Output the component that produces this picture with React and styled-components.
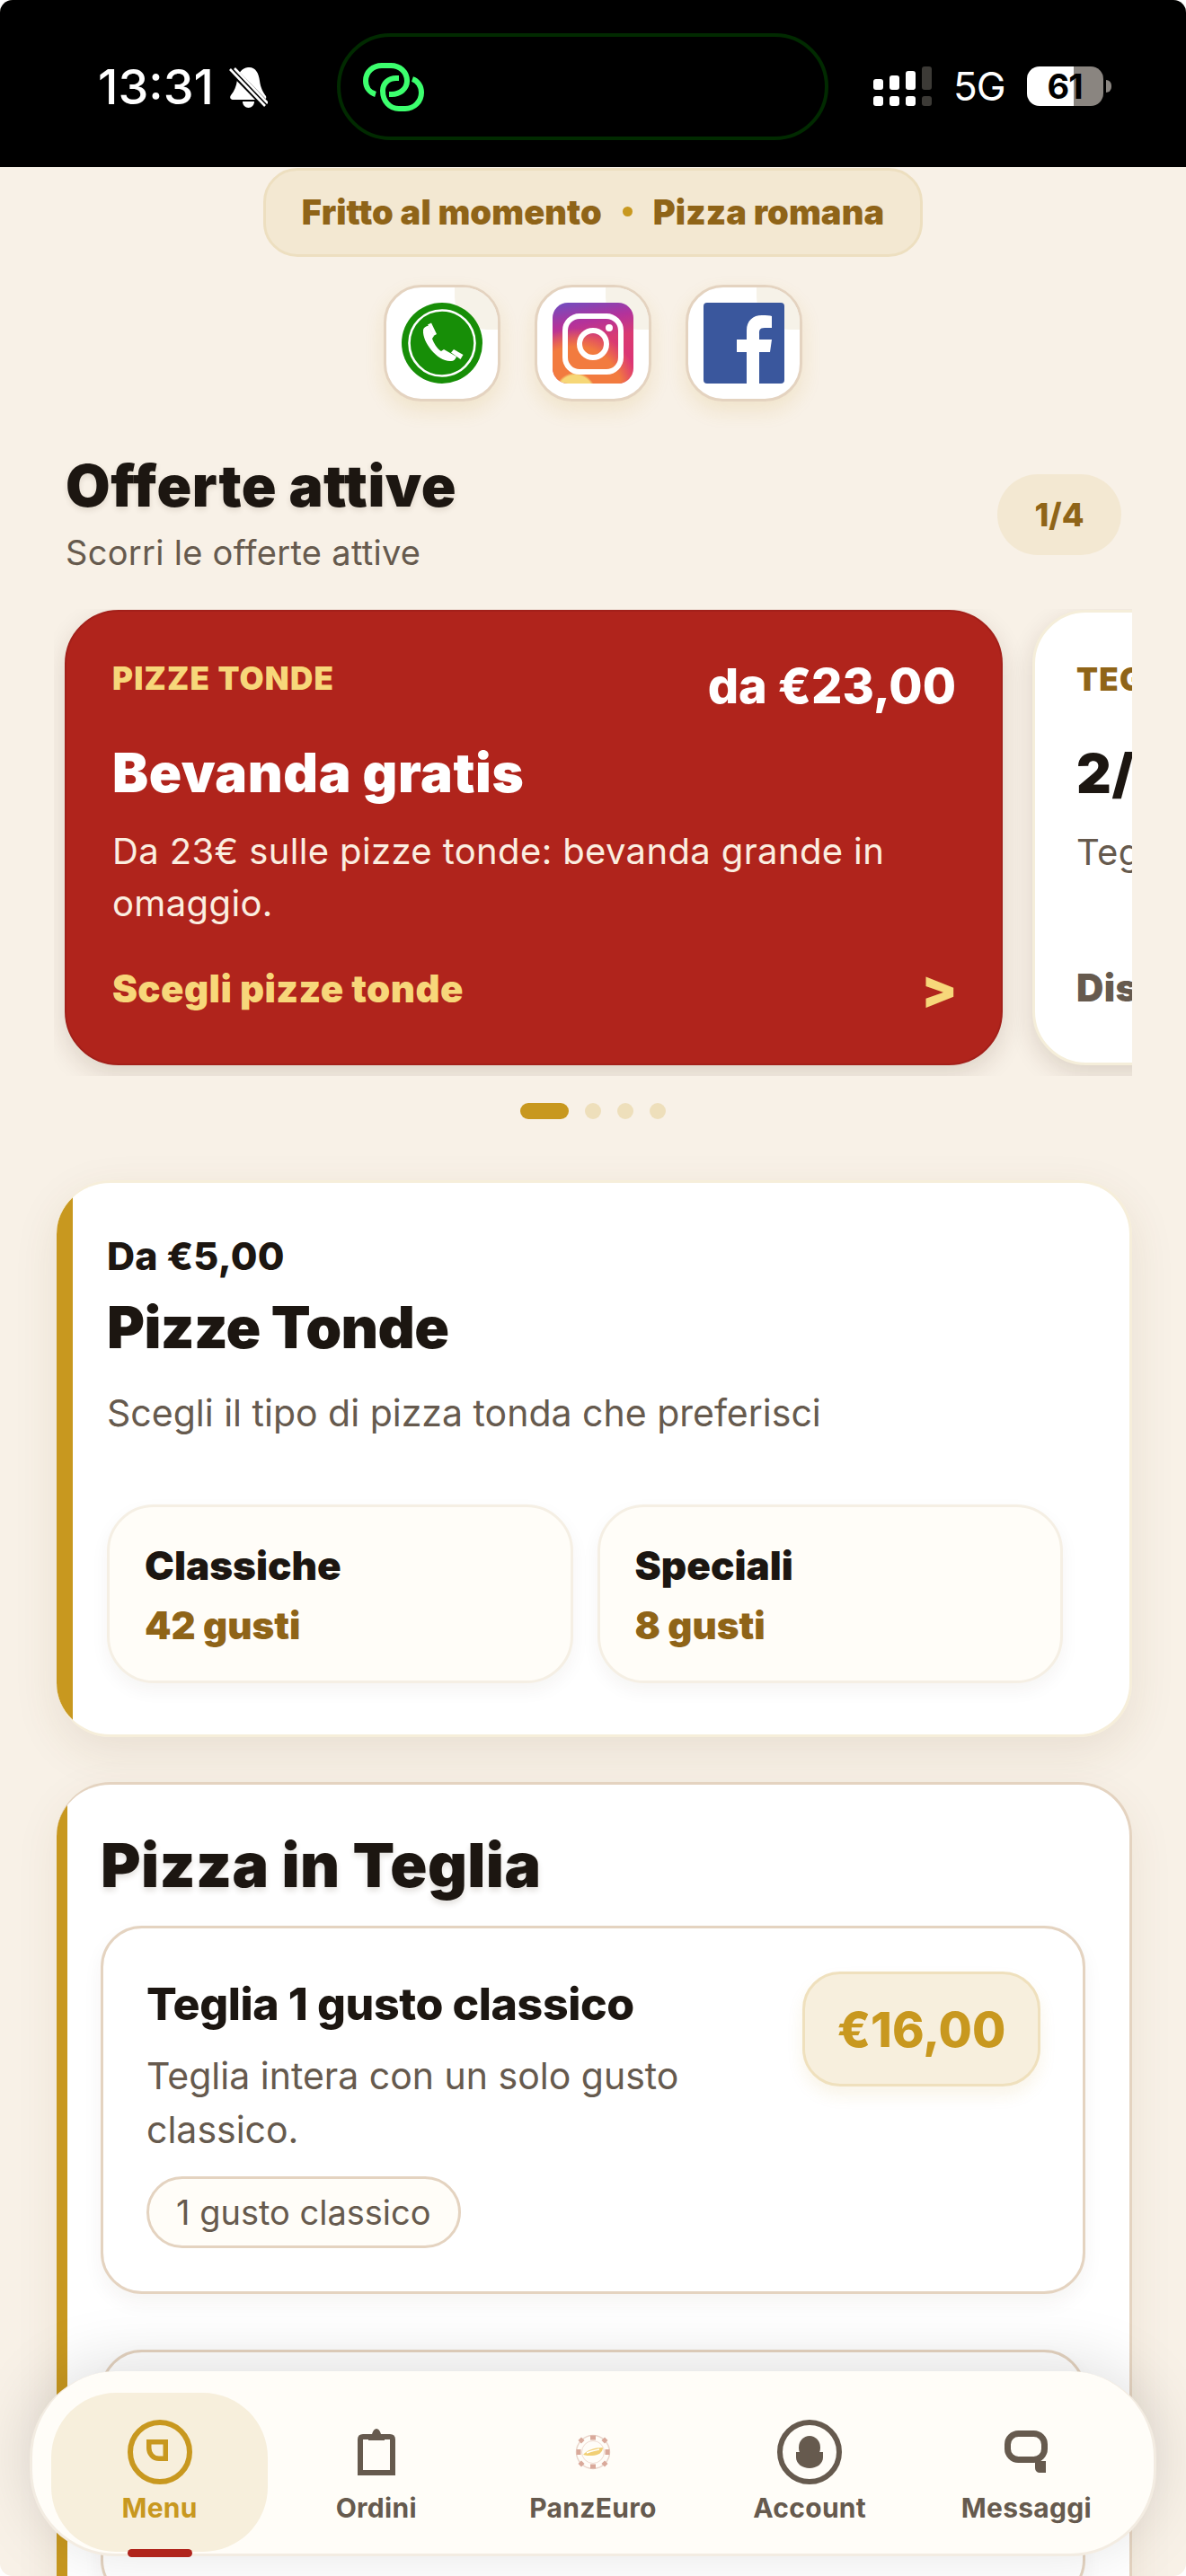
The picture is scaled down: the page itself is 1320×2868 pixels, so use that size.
import React from "react";
import styled, { createGlobalStyle } from "styled-components";

const ink = "#1c1611";
const muted = "#665a4e";
const gold = "#c8981f";
const brown = "#8f6418";
const line = "#e4d3c0";
const sand = "#f3e8d2";
const red = "#b0241c";
const butter = "#f7d77a";

const Global = createGlobalStyle`
  html, body { margin: 0; padding: 0; background: #ffffff; }
  * { box-sizing: border-box; }
  body { font-family: Inter, "Liberation Sans", sans-serif; }
`;

const Screen = styled.div`
  position: relative;
  width: 1320px;
  height: 2868px;
  overflow: hidden;
  background: #f8f1e7;
  border-radius: 14px;
`;

const StatusBar = styled.header`
  height: 186px;
  background: #000;
  display: flex;
  align-items: flex-start;
  padding: 37px 0 0 109px;
  color: #fff;
`;
const Clock = styled.div`
  display: flex;
  align-items: center;
  gap: 17px;
  width: 266px;
  height: 119px;
  font-size: 54px;
  font-weight: 500;
  line-height: 1;
`;
const Island = styled.div`
  width: 547px;
  height: 119px;
  border: 4px solid #012a00;
  border-radius: 60px;
  padding: 29px 0 0 25px;
  flex-shrink: 0;
`;
const StatusRight = styled.div`
  display: flex;
  align-items: center;
  margin: 37px 0 0 50px;
  height: 44px;
`;
const FiveG = styled.span`
  font-size: 44px;
  font-weight: 400;
  margin-left: 24px;
  line-height: 44px;
  letter-spacing: -1px;
`;
const Battery = styled.div`
  position: relative;
  margin-left: 24px;
  width: 85px;
  height: 44px;
  border-radius: 14px;
  display: flex;
  align-items: center;
  justify-content: center;
  background: linear-gradient(90deg, #fff 61%, #8a8580 61%);
  color: #000;
  font-size: 38px;
  font-weight: 700;
  letter-spacing: -1px;
  &::after {
    content: "";
    position: absolute;
    right: -9px;
    top: 15px;
    width: 6px;
    height: 14px;
    border-radius: 0 6px 6px 0;
    background: #8a8580;
  }
`;

const Main = styled.main`
  display: flex;
  flex-direction: column;
`;
const Banner = styled.div`
  align-self: center;
  margin-top: 1px;
  width: 734px;
  height: 99px;
  display: flex;
  align-items: center;
  justify-content: center;
  gap: 23px;
  background: ${sand};
  border: 3px solid #eddfc0;
  border-radius: 38px;
  color: ${brown};
  font-size: 38px;
  font-weight: 900;
  letter-spacing: 0.1px;
  padding-bottom: 2px;
`;
const BannerDot = styled.i`
  width: 11px;
  height: 11px;
  border-radius: 50%;
  background: ${gold};
`;
const Socials = styled.nav`
  display: flex;
  justify-content: center;
  gap: 38px;
  margin-top: 31px;
`;
const Social = styled.a`
  position: relative;
  width: 130px;
  height: 130px;
  background: #fff;
  border: 3px solid ${line};
  border-radius: 42px;
  display: flex;
  align-items: center;
  justify-content: center;
  box-shadow: 0 10px 22px rgba(200, 152, 31, 0.14);
  &::before {
    content: "";
    position: absolute;
    top: 0;
    right: 0;
    width: 48px;
    height: 47px;
    background: #f6f2e8;
    border-radius: 0 38px 0 36px;
  }
  svg { position: relative; }
`;

const SectionHead = styled.div`
  display: flex;
  justify-content: space-between;
  align-items: center;
  margin-top: 58px;
  padding: 0 72px 0 73px;
`;
const SectionTitle = styled.h2`
  margin: 0;
  font-size: 64px;
  line-height: 72px;
  font-weight: 900;
  letter-spacing: 0.5px;
  color: ${ink};
  text-shadow: 0 3px 6px rgba(60, 40, 20, 0.12);
`;
const SectionSub = styled.p`
  margin: 14px 0 0;
  font-size: 38px;
  line-height: 48px;
  color: ${muted};
  letter-spacing: 0.3px;
`;
const Counter = styled.div`
  width: 138px;
  height: 90px;
  border-radius: 45px;
  background: ${sand};
  color: ${brown};
  font-size: 36px;
  font-weight: 800;
  display: flex;
  align-items: center;
  justify-content: center;
  margin-top: 2px;
`;

const Carousel = styled.div`
  margin: 39px 0 0 60px;
  width: 1200px;
  height: 520px;
  overflow: hidden;
  display: flex;
  gap: 33px;
  padding: 1px 0 0 12px;
`;
const Offer = styled.article`
  flex: 0 0 1044px;
  height: 507px;
  border-radius: 60px;
  padding: 51px 50px 58px ${(p) => (p.$light ? "46px" : "51px")};
  display: flex;
  flex-direction: column;
  white-space: nowrap;
  background: ${(p) => (p.$light ? "#fff" : red)};
  border: ${(p) => (p.$light ? "3px solid #f5eeda" : "2px solid #a3201a")};
  color: ${(p) => (p.$light ? ink : "#fff")};
  box-shadow: 0 10px 28px rgba(60, 30, 10, 0.14);
`;
const OfferTop = styled.div`
  display: flex;
  justify-content: space-between;
  align-items: flex-start;
  height: 64px;
`;
const OfferTag = styled.span`
  margin-top: 3px;
  font-size: 35px;
  line-height: 40px;
  font-weight: 900;
  letter-spacing: 1.2px;
  color: ${(p) => (p.$light ? brown : butter)};
`;
const OfferPrice = styled.span`
  font-size: 54px;
  line-height: 64px;
  font-weight: 800;
`;
const OfferTitle = styled.h3`
  margin: 28px 0 0;
  font-size: 60px;
  line-height: 72px;
  font-weight: 900;
  letter-spacing: 0.6px;
`;
const OfferText = styled.p`
  margin: 23px 0 0;
  font-size: 40px;
  line-height: 58px;
  letter-spacing: 0.37px;
  white-space: normal;
  color: ${(p) => (p.$light ? muted : "#fbeee0")};
`;
const OfferCta = styled.div`
  margin-top: auto;
  display: flex;
  justify-content: space-between;
  align-items: center;
  font-size: 42px;
  line-height: 50px;
  font-weight: 900;
  letter-spacing: 0.4px;
  color: ${(p) => (p.$light ? muted : butter)};
`;
const Chevron = styled.span`
  font-size: 58px;
  font-weight: 900;
  margin-right: -2px;
`;
const Dots = styled.div`
  margin-top: 30px;
  display: flex;
  justify-content: center;
  gap: 18px;
`;
const Dot = styled.i`
  width: ${(p) => (p.$active ? "54px" : "18px")};
  height: 18px;
  border-radius: 9px;
  background: ${(p) => (p.$active ? gold : "#eedfbb")};
`;

const TondeCard = styled.section`
  margin: 68px 60px 0 63px;
  background: linear-gradient(90deg, ${gold} 18px, #fff 18px);
  border: 3px solid #f6eeda;
  border-left: 0;
  border-radius: 60px;
  padding: 56px 74px 57px 56px;
  box-shadow: 0 16px 50px rgba(100, 70, 30, 0.1);
`;
const FromPrice = styled.div`
  font-size: 43px;
  line-height: 50px;
  font-weight: 800;
  letter-spacing: 0.2px;
  color: ${ink};
`;
const CardTitle = styled.h2`
  margin: 17px 0 0;
  font-size: 64px;
  line-height: 76px;
  font-weight: 900;
  color: ${ink};
  letter-spacing: -0.6px;
`;
const CardSub = styled.p`
  margin: 32px 0 0;
  font-size: 41px;
  line-height: 50px;
  color: ${muted};
`;
const Choices = styled.div`
  margin-top: 77px;
  display: grid;
  grid-template-columns: 1fr 1fr;
  gap: 27px;
`;
const Choice = styled.a`
  height: 199px;
  background: #fffdf8;
  border: 3px solid #f5efe4;
  border-radius: 52px;
  padding: 39px 39px 0;
  box-shadow: 0 8px 20px rgba(60, 40, 20, 0.05);
`;
const ChoiceName = styled.div`
  font-size: 44px;
  line-height: 52px;
  font-weight: 900;
  color: ${ink};
`;
const ChoiceCount = styled.div`
  margin-top: 16px;
  font-size: 42px;
  line-height: 50px;
  font-weight: 900;
  color: ${brown};
`;

const TegliaCard = styled.section`
  margin: 50px 60px 0 63px;
  background: linear-gradient(90deg, ${gold} 12px, #fff 12px);
  border: 3px solid ${line};
  border-left: 0;
  border-radius: 60px;
  padding: 47px 49px 40px 49px;
  box-shadow: 0 16px 50px rgba(100, 70, 30, 0.08);
`;
const TegliaTitle = styled.h2`
  margin: 0 0 26px;
  font-size: 68px;
  line-height: 84px;
  font-weight: 900;
  color: ${ink};
  letter-spacing: 0.4px;
  text-shadow: 0 4px 6px rgba(60, 40, 20, 0.14);
`;
const Item = styled.article`
  display: flex;
  justify-content: space-between;
  align-items: flex-start;
  background: #fff;
  border: 3px solid ${line};
  border-radius: 46px;
  padding: 48px 47px 48px 48px;
  min-height: ${(p) => p.$min || "auto"};
  box-shadow: 0 10px 22px rgba(60, 40, 20, 0.05);
  & + & { margin-top: 62px; }
`;
const ItemBody = styled.div`
  width: 680px;
`;
const ItemTitle = styled.h3`
  margin: 6px 0 0;
  font-size: 50px;
  line-height: 60px;
  font-weight: 800;
  color: ${ink};
  letter-spacing: -0.4px;
  white-space: nowrap;
`;
const ItemText = styled.p`
  margin: 20px 0 0;
  font-size: 41px;
  line-height: 60px;
  color: ${muted};
`;
const ItemTag = styled.span`
  display: inline-flex;
  align-items: center;
  margin-top: 22px;
  height: 80px;
  padding: 0 30px;
  background: #fffdf8;
  border: 3px solid ${line};
  border-radius: 40px;
  font-size: 38px;
  color: ${muted};
`;
const PriceTag = styled.div`
  width: 265px;
  height: 128px;
  display: flex;
  align-items: center;
  justify-content: center;
  background: #f7efdd;
  border: 3px solid #efe0bd;
  border-radius: 42px;
  color: ${gold};
  font-size: 54px;
  font-weight: 800;
  box-shadow: 0 10px 18px rgba(200, 152, 31, 0.1);
`;

const BottomNav = styled.nav`
  position: absolute;
  left: 33px;
  top: 2640px;
  width: 1254px;
  height: 206px;
  background: #fffdf8;
  border: 3px solid #f3ece2;
  border-top: 0;
  border-radius: 96px;
  padding: 24px 21px 0;
  display: grid;
  grid-template-columns: repeat(5, 1fr);
  box-shadow: 0 -8px 70px rgba(0, 0, 0, 0.13);
`;
const NavItem = styled.a`
  position: relative;
  height: 177px;
  padding-top: 30px;
  display: flex;
  flex-direction: column;
  align-items: center;
  border-radius: 72px;
  background: ${(p) => (p.$active ? "#f7efdc" : "transparent")};
  color: ${(p) => (p.$active ? gold : muted)};
  font-size: 30px;
  line-height: 36px;
  font-weight: 700;
  letter-spacing: 0.3px;
`;
const NavIcon = styled.div`
  height: 72px;
  display: flex;
  align-items: center;
  justify-content: center;
  margin-bottom: 8px;
`;
const ActiveBar = styled.i`
  position: absolute;
  bottom: -6px;
  left: 85px;
  width: 72px;
  height: 9px;
  border-radius: 5px;
  background: ${red};
`;

const LinkIcon = () => (
  <svg width="68" height="54" viewBox="0 0 68 54" fill="none" stroke="#3cff6e" strokeWidth="6">
    <path d="M14 35C7 33 3 27 3 20C3 10 11 3 21 3H31C41 3 49 10 49 20C49 29 41 35 32 35H29" />
    <path d="M40 17H37C28 17 22 23 22 31C22 43 30 51 40 51H47C57 51 65 43 65 33C65 26 61 20 55 18" />
  </svg>
);

const BellOff = () => (
  <svg width="43" height="46" viewBox="0 0 43 46">
    <path d="M21 1C29 0 33 7 34 16C35 24 38 29 41 33C42 36 40 37 38 37H5C2 37 0 35 2 32C6 27 8 22 9 15C10 7 14 2 21 1Z" fill="#fff" />
    <path d="M15 39H28C28 43 25 46 21.5 46C18 46 15 43 15 39Z" fill="#fff" />
    <path d="M3 4L42 44" stroke="#000" strokeWidth="9" />
    <path d="M1 3L40 44" stroke="#fff" strokeWidth="2.6" />
    <path d="M6 2L43 41" stroke="#fff" strokeWidth="2.6" />
  </svg>
);

const Signal = () => (
  <svg width="65" height="44" viewBox="0 0 65 44">
    <g fill="#fff">
      <rect x="0" y="14" width="11" height="12" rx="3" />
      <rect x="18" y="10" width="11" height="16" rx="3" />
      <rect x="36" y="5" width="11" height="21" rx="3" />
      <rect x="0" y="33" width="11" height="11" rx="3" />
      <rect x="18" y="33" width="11" height="11" rx="3" />
      <rect x="36" y="33" width="11" height="11" rx="3" />
    </g>
    <g fill="#3c3a36">
      <rect x="54" y="0" width="11" height="26" rx="3" />
      <rect x="54" y="33" width="11" height="11" rx="3" />
    </g>
  </svg>
);

const WhatsApp = () => (
  <svg width="90" height="90" viewBox="0 0 90 90">
    <circle cx="45" cy="45" r="45" fill="#178e07" />
    <circle cx="45" cy="45" r="36.5" fill="none" stroke="#fff" strokeWidth="2.6" />
    <path d="M24 31C23 44 40 66 55 65C58 65 60 63 61 60L47 52L44 54C39 51 36 45 34 40L36 37L30 26C27 26 24 28 24 31Z" fill="#fff" />
    <path d="M29 24.5L33 22.5L39 35L35.5 37Z" fill="#fff" />
    <path d="M55 55.5L58 52L68.5 58L65.5 63Z" fill="#fff" />
  </svg>
);

const Instagram = () => (
  <svg width="90" height="90" viewBox="0 0 90 90">
    <defs>
      <linearGradient id="igBase" x1="0" y1="0" x2="0.2" y2="1">
        <stop offset="0" stopColor="#6d4fc2" />
        <stop offset="0.3" stopColor="#b3329b" />
        <stop offset="0.55" stopColor="#d93a72" />
        <stop offset="1" stopColor="#dc3376" />
      </linearGradient>
      <radialGradient id="igGlow" cx="0.28" cy="1.12" r="0.8">
        <stop offset="0" stopColor="#f6d777" />
        <stop offset="0.28" stopColor="#f6d777" />
        <stop offset="0.32" stopColor="#f27b3f" />
        <stop offset="0.72" stopColor="#f27b3f" />
        <stop offset="1" stopColor="#f27b3f" stopOpacity="0" />
      </radialGradient>
    </defs>
    <rect width="90" height="90" rx="17" fill="url(#igBase)" />
    <rect width="90" height="90" rx="17" fill="url(#igGlow)" />
    <rect x="14" y="15" width="62" height="62" rx="16" fill="none" stroke="#fff" strokeWidth="6" />
    <circle cx="45" cy="46" r="15" fill="none" stroke="#fff" strokeWidth="6" />
    <circle cx="63" cy="28" r="4" fill="#fff" />
  </svg>
);

const Facebook = () => (
  <svg width="90" height="90" viewBox="0 0 90 90">
    <rect width="90" height="90" rx="4" fill="#3a579d" />
    <path d="M48 90V55H37V41H48V31C48 20 55 14 65 14C70 14 74 14 76 15V28H68C62 28 62 31 62 35V41H76L74 55H62V90Z" fill="#fff" />
  </svg>
);

const MenuIcon = () => (
  <svg width="72" height="72" viewBox="0 0 72 72" fill="none" stroke={gold}>
    <circle cx="36" cy="36" r="33" strokeWidth="6" />
    <path d="M23.75 24.75H42.25V43.25H35C28.5 43.25 23.75 38 23.75 31.5Z" strokeWidth="5.5" />
  </svg>
);

const OrdersIcon = () => (
  <svg width="42" height="52" viewBox="0 0 42 52" fill="none">
    <path d="M3 49V12C3 10 4 9 6 9H36C38 9 39 10 39 12V49Z" stroke={muted} strokeWidth="6" />
    <path d="M12 6H16C17 2 19 0 21 0C23 0 25 2 26 6H30V13H12Z" fill={muted} />
  </svg>
);

const CoinIcon = () => (
  <svg width="40" height="40" viewBox="0 0 40 40">
    <circle cx="20" cy="20" r="18.5" fill="#fffdf8" stroke="#ead6cc" strokeWidth="1.5" />
    <circle cx="20" cy="20" r="12.5" fill="#fffdf8" stroke="#efdcd2" strokeWidth="1" />
    <g fill="#d9a99a">
      <rect x="17" y="1.5" width="6" height="5" />
      <rect x="17" y="33.5" width="6" height="5" />
      <rect x="1.5" y="17" width="5" height="6" />
      <rect x="33.5" y="17" width="5" height="6" />
      <rect x="-2.5" y="-2.5" width="5" height="5" transform="translate(7 7) rotate(45)" />
      <rect x="-2.5" y="-2.5" width="5" height="5" transform="translate(33 7) rotate(45)" />
      <rect x="-2.5" y="-2.5" width="5" height="5" transform="translate(7 33) rotate(45)" />
      <rect x="-2.5" y="-2.5" width="5" height="5" transform="translate(33 33) rotate(45)" />
    </g>
    <path d="M9 23C13 18 21 15 31 15C31 20 26 24 19 24C15 24 12 24 9 23Z" fill="#f1cf74" />
    <path d="M13 21C17 19 22 18 27 17" stroke="#fff" strokeWidth="1.5" fill="none" />
  </svg>
);

const AccountIcon = () => (
  <svg width="72" height="72" viewBox="0 0 72 72" fill="none">
    <circle cx="36" cy="36" r="33" stroke={muted} strokeWidth="6" />
    <ellipse cx="36" cy="31" rx="12" ry="13" fill={muted} />
    <path d="M21 36H51V42C51 49 44 54 36 54C28 54 21 49 21 42Z" fill={muted} />
  </svg>
);

const MessageIcon = () => (
  <svg width="48" height="48" viewBox="0 0 48 48" fill="none">
    <rect x="3.5" y="3.5" width="41" height="29" rx="12" stroke={muted} strokeWidth="7" />
    <path d="M34 34H46V47H40C36 47 34 45 34 41Z" fill={muted} />
  </svg>
);

export default function App() {
  return (
    <Screen>
      <Global />
      <StatusBar>
        <Clock>
          13:31
          <BellOff />
        </Clock>
        <Island>
          <LinkIcon />
        </Island>
        <StatusRight>
          <Signal />
          <FiveG>5G</FiveG>
          <Battery>61</Battery>
        </StatusRight>
      </StatusBar>

      <Main>
        <Banner>
          <span>Fritto al momento</span>
          <BannerDot />
          <span>Pizza romana</span>
        </Banner>

        <Socials>
          <Social aria-label="WhatsApp"><WhatsApp /></Social>
          <Social aria-label="Instagram"><Instagram /></Social>
          <Social aria-label="Facebook"><Facebook /></Social>
        </Socials>

        <SectionHead>
          <div>
            <SectionTitle>Offerte attive</SectionTitle>
            <SectionSub>Scorri le offerte attive</SectionSub>
          </div>
          <Counter>1/4</Counter>
        </SectionHead>

        <Carousel>
          <Offer>
            <OfferTop>
              <OfferTag>PIZZE TONDE</OfferTag>
              <OfferPrice>da €23,00</OfferPrice>
            </OfferTop>
            <OfferTitle>Bevanda gratis</OfferTitle>
            <OfferText>Da 23€ sulle pizze tonde: bevanda grande in omaggio.</OfferText>
            <OfferCta>
              <span>Scegli pizze tonde</span>
              <Chevron>&gt;</Chevron>
            </OfferCta>
          </Offer>
          <Offer $light>
            <OfferTop>
              <OfferTag $light>TEGLIE</OfferTag>
            </OfferTop>
            <OfferTitle>2/3 gusti</OfferTitle>
            <OfferText $light>Teglia</OfferText>
            <OfferCta $light>
              <span>Disponibile</span>
            </OfferCta>
          </Offer>
        </Carousel>

        <Dots>
          <Dot $active />
          <Dot />
          <Dot />
          <Dot />
        </Dots>

        <TondeCard>
          <FromPrice>Da €5,00</FromPrice>
          <CardTitle>Pizze Tonde</CardTitle>
          <CardSub>Scegli il tipo di pizza tonda che preferisci</CardSub>
          <Choices>
            <Choice>
              <ChoiceName>Classiche</ChoiceName>
              <ChoiceCount>42 gusti</ChoiceCount>
            </Choice>
            <Choice>
              <ChoiceName>Speciali</ChoiceName>
              <ChoiceCount>8 gusti</ChoiceCount>
            </Choice>
          </Choices>
        </TondeCard>

        <TegliaCard>
          <TegliaTitle>Pizza in Teglia</TegliaTitle>
          <Item>
            <ItemBody>
              <ItemTitle>Teglia 1 gusto classico</ItemTitle>
              <ItemText>Teglia intera con un solo gusto classico.</ItemText>
              <ItemTag>1 gusto classico</ItemTag>
            </ItemBody>
            <PriceTag>€16,00</PriceTag>
          </Item>
          <Item $min="280px" />
        </TegliaCard>
      </Main>

      <BottomNav>
        <NavItem $active>
          <NavIcon><MenuIcon /></NavIcon>
          Menu
          <ActiveBar />
        </NavItem>
        <NavItem>
          <NavIcon><OrdersIcon /></NavIcon>
          Ordini
        </NavItem>
        <NavItem>
          <NavIcon><CoinIcon /></NavIcon>
          PanzEuro
        </NavItem>
        <NavItem>
          <NavIcon><AccountIcon /></NavIcon>
          Account
        </NavItem>
        <NavItem>
          <NavIcon><MessageIcon /></NavIcon>
          Messaggi
        </NavItem>
      </BottomNav>
    </Screen>
  );
}
